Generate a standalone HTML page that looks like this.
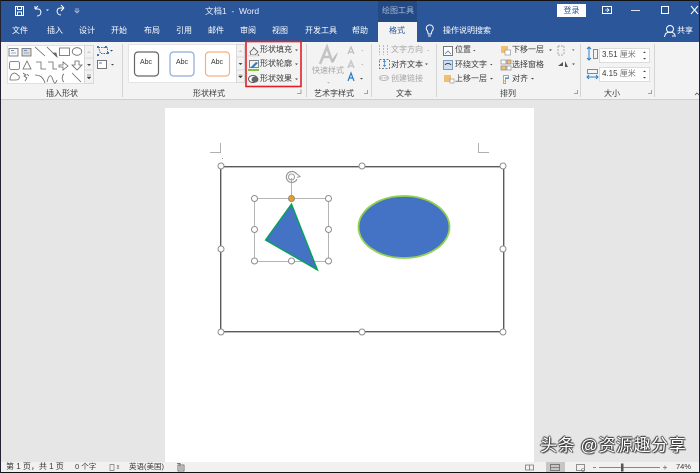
<!DOCTYPE html>
<html><head><meta charset="utf-8">
<style>
html,body{margin:0;padding:0;width:700px;height:473px;overflow:hidden;background:#e6e6e6}
body{position:relative;font-family:"Liberation Sans","Noto Sans CJK SC",sans-serif;font-size:8px;color:#3a3a3a}
.a{position:absolute;white-space:nowrap;line-height:10px}
.b{position:absolute}
.t{color:#fff;top:26px;font-size:8px}
.g{color:#a6a6a6}
svg{position:absolute;left:0;top:0}
</style></head><body>
<div class="b" style="left:0;top:0;width:700px;height:42px;background:#2b579a"></div>
<div class="b" style="left:378px;top:1px;width:39px;height:21px;background:#234a85"></div>
<div class="b" style="left:378px;top:22px;width:39px;height:20px;background:#f3f3f3"></div>
<div class="b" style="left:0;top:42px;width:700px;height:57px;background:#f3f3f3"></div>
<div class="b" style="left:0;top:99px;width:700px;height:1px;background:#cfcfcf"></div>
<div class="b" style="left:165px;top:108px;width:369px;height:355px;background:#fff"></div>
<div class="b" style="left:0;top:462px;width:700px;height:10px;background:#f1f1f1"></div>

<span class="a" style="left:205px;top:6px;color:#e8eef7;font-size:8.5px">文档1 &nbsp;-&nbsp; Word</span>
<span class="a" style="left:382px;top:6px;color:#a9bcd8;font-size:8px">绘图工具</span>
<div class="a" style="left:557px;top:4px;width:29px;height:13px;background:#fff;color:#2b579a;text-align:center;line-height:13px">登录</div>
<span class="a t" style="left:12px">文件</span><span class="a t" style="left:47px">插入</span><span class="a t" style="left:79px">设计</span><span class="a t" style="left:111px">开始</span><span class="a t" style="left:144px">布局</span><span class="a t" style="left:176px">引用</span><span class="a t" style="left:208px">邮件</span><span class="a t" style="left:240px">审阅</span><span class="a t" style="left:272px">视图</span><span class="a t" style="left:305px">开发工具</span><span class="a t" style="left:352px">帮助</span>
<span class="a" style="left:389px;top:26px;color:#2b579a">格式</span>
<span class="a t" style="left:443px">操作说明搜索</span><span class="a t" style="left:677px">共享</span>

<svg width="700" height="473" viewBox="0 0 700 473" fill="none">
<rect x="0" y="0" width="700" height="1" fill="#111"/><rect x="0" y="472" width="700" height="1" fill="#111"/><rect x="0" y="0" width="1" height="473" fill="#223"/><rect x="699" y="0" width="1" height="473" fill="#223"/>
<!-- title bar icons -->
<path d="M15.500 6.500H23.500V15.500H15.500ZM17.500 6.500V9.500H21.500V6.500M17.500 15.500V12H21.500V15.500" stroke="#fff"/>
<path d="M35 8V5M35 8H38C42 8 42 15 37 15M35 8L38 5" stroke="#fff" transform="translate(0,1)"/>
<path d="M46 9.500h3l-1.500 1.500z" fill="#fff"/>
<path d="M64 8H60C56 8 56 15 61 15M64 8L61 5M64 8L61 11" stroke="#fff"/>
<path d="M75 11h4l-2 2zM75 9h4" stroke="#ccd" stroke-width=".7"/>
<rect x="602.500" y="6.500" width="9" height="7" stroke="#fff"/><path d="M605 10h4M607 8l2 2-2 2" stroke="#fff" stroke-width=".8"/>
<path d="M631 10.500h9" stroke="#dfe6f2"/>
<rect x="661.500" y="6.500" width="7" height="7" stroke="#fff"/>
<path d="M691 6l7 8M698 6l-7 8" stroke="#fff"/>
<path d="M427 31a3.500 3.500 0 1 1 4.500 0l-.8 3h-3z M427.500 36h3" stroke="#fff" transform="translate(.5,0)"/>
<circle cx="670" cy="29" r="3.500" stroke="#fff"/><path d="M664.500 37c.5-4 3-5 5.500-5s4 1 5 3M672 36h4" stroke="#fff"/>
<!-- ribbon separators -->
<path d="M122.500 44V97M306.500 44V97M371.500 44V97M436.500 44V97M580.500 44V97M654.500 44V97" stroke="#d4d4d4"/>
<!-- shapes gallery -->
<rect x="7.500" y="45.500" width="86" height="38" fill="#fff" stroke="#e0e0e0"/>
<rect x="84.500" y="45.500" width="9" height="38" fill="#f2f2f2" stroke="#d8d8d8"/>
<path d="M84 58h10M84 70h10" stroke="#d8d8d8"/>
<path d="M87 53l2-2 2 2z" fill="#ccc"/><path d="M87 64h4l-2 2z" fill="#444"/><path d="M87 75h4M87 77h4l-2 2z" fill="#444" stroke="#444" stroke-width=".5"/>
<g stroke="#666" stroke-width=".8">
<rect x="9" y="48.500" width="9" height="7.500" fill="#f4f8fc"/><path d="M11 50.500h3" stroke="#3a7fc4"/><path d="M11 53h5" stroke="#999"/>
<rect x="22" y="48.500" width="9" height="7.500" fill="#ddd"/><path d="M24 50.500h3" stroke="#3a7fc4"/><path d="M24 53h5" stroke="#999"/>
<path d="M35 47l10 9M47 47l9 9"/><path d="M53 53l4 4-1-4z" fill="#666"/>
<rect x="59.500" y="48" width="10" height="7.500"/><ellipse cx="77" cy="51.500" rx="4.800" ry="3.800"/>
<rect x="9.500" y="61.500" width="10" height="8" rx="2"/><path d="M27 61l4 8h-8zM36 62h5v7h5M48 62h5v7h4"/>
<path d="M59 65h4v-3l5 4-5 4v-3h-4z"/><path d="M75 61h4v4h3l-5 5-5-5h3z"/>
<path d="M10 80c0-3 1-6 4-7 3 0 3 2 5 3 1 3-1 4-3 4h-5z"/>
<path d="M23 73l3 2-2 1 3 2-2 3M27 74l2 2"/>
<path d="M35 75c5 0 8 2 10 8M47 82c2-8 4-8 6-2s3 2 4 0M64 74c-2 1-1 3-2 4 1 1 0 3 2 4M72 73l9 9"/>
</g>
<!-- edit/textbox -->
<path d="M98.500 47.500h9v6h-7z" stroke="#666" stroke-dasharray="1.500 1"/><g fill="#2a7cc7"><rect x="97" y="46" width="2" height="2"/><rect x="105" y="46" width="2" height="2"/><rect x="97" y="54" width="2" height="2"/><rect x="107" y="52" width="2" height="2"/></g>
<path d="M110 50h3l-1.500 1.500zM111 64h3l-1.500 1.500z" fill="#444"/>
<rect x="97.500" y="60.500" width="9" height="8" fill="#fff" stroke="#777"/><path d="M99 63h3" stroke="#3a7fc4"/>
<!-- styles gallery -->
<rect x="128.500" y="44.500" width="115" height="38" fill="#fff" stroke="#e4e4e4"/>
<rect x="236.500" y="44.500" width="8" height="38" fill="#f2f2f2" stroke="#d8d8d8"/>
<path d="M236 57h9M236 70h9" stroke="#d8d8d8"/>
<path d="M238.500 52l2-2 2 2z" fill="#ccc"/><path d="M238.500 63h4l-2 2z" fill="#444"/><path d="M238.500 75h4M238.500 76h4l-2 2z" fill="#444" stroke="#444" stroke-width=".4"/>
<rect x="134.500" y="52" width="24" height="24" rx="3.500" fill="#fff" stroke="#666" stroke-width="1.200"/>
<rect x="170" y="52" width="24" height="24" rx="3.500" fill="#fff" stroke="#8eaadb" stroke-width="1.200"/>
<rect x="205.500" y="52" width="24" height="24" rx="3.500" fill="#fff" stroke="#f4b183" stroke-width="1.200"/>
<!-- red box -->
<rect x="246" y="41.500" width="55" height="45" stroke="#e01f26" stroke-width="1.600"/>
<!-- shape format icons -->
<path d="M250 52l4-4 4 4-3 3h-4zM253 47l1 1M258 54l1 2" stroke="#555" stroke-width=".8"/>
<rect x="248" y="55" width="10" height="1.500" fill="#ddd"/>
<path d="M251 67l5-5 2 1-5 5h-2z" fill="#2a7cc7"/><rect x="249.500" y="60.500" width="9" height="7" stroke="#666" stroke-width=".8"/>
<rect x="248" y="69" width="11" height="2" fill="#7cc242"/>
<ellipse cx="253" cy="79" rx="4.500" ry="3.500" fill="#fff" stroke="#555"/><ellipse cx="255" cy="79.500" rx="3.500" ry="3" fill="#666"/>
<path d="M295 49.500h3l-1.500 1.500zM295 63.500h3l-1.500 1.500zM295 78.500h3l-1.500 1.500z" fill="#444"/>
<!-- WordArt -->
<path d="M320 64l7-17 5 14M323 57h7" stroke="#c4c4c4" stroke-width="2.600"/><path d="M331 62c2-4 4-7 7-10-1 4-3 8-5 11z" fill="#bdbdbd"/>
<path d="M327 82h3l-1.500 1.500z" fill="#bbb"/>
<path d="M348 54l3-7 3 7M349 52h4" stroke="#bbb" stroke-width="1.200"/>
<path d="M348 68l3-7 3 7M349 66h4" stroke="#c9c9c9" stroke-width="1.600"/>
<path d="M348 81l3-8 3 8M349 78h4" stroke="#2a7cc7" stroke-width="1.200"/>
<path d="M361 50h2.500l-1.200 1.200zM361 64h2.500l-1.200 1.200z" fill="#bbb"/><path d="M360 78h3l-1.500 1.500z" fill="#444"/>
<!-- text group -->
<path d="M379.500 45v10M383.500 45v10M387.500 45v10" stroke="#bbb" stroke-dasharray="2 1"/>
<rect x="379.500" y="59.500" width="10" height="9" stroke="#777" stroke-dasharray="2 1.500"/><path d="M384.500 61v5M383 62l1.500-1.500 1.500 1.500M383 65l1.500 1.500 1.500-1.500" stroke="#2a7cc7" stroke-width=".7"/>
<path d="M379 78h4M384 78h5" stroke="#bbb"/><ellipse cx="384" cy="78" rx="4.500" ry="2.500" stroke="#bbb"/>
<path d="M427 50h2.500l-1.200 1.200z" fill="#bbb"/><path d="M425 63.500h3l-1.500 1.500z" fill="#444"/>
<!-- arrange -->
<rect x="443.500" y="46.500" width="9" height="9" fill="#fff" stroke="#777"/><path d="M445 54l3-3 3 3" stroke="#3a7fc4" stroke-width=".8"/>
<rect x="443.500" y="60.500" width="9" height="9" fill="#cfe0f2" stroke="#7a9cc0"/><path d="M445 65c1-2 5-2 6 0" stroke="#444"/>
<rect x="444" y="75" width="7" height="7" fill="#f0c070"/><rect x="450" y="79" width="4" height="4" fill="#fff" stroke="#888" stroke-width=".6"/>
<rect x="501" y="46" width="7" height="7" fill="#f0c070"/><rect x="505" y="50" width="5.500" height="5" fill="#fff" stroke="#888" stroke-width=".6"/>
<g stroke="#888" stroke-width=".7"><rect x="501" y="60" width="5" height="4" fill="#fff"/><rect x="507" y="60" width="4" height="4" fill="#f0c070"/><rect x="501" y="66" width="5" height="4" fill="#f0c070"/><rect x="507" y="66" width="4" height="4" fill="#fff"/></g>
<path d="M503.500 75.500h5v3h-3v5h-2z" fill="#fff" stroke="#888" stroke-width=".7"/><path d="M505 78h4" stroke="#2a7cc7"/><path d="M503 81h3" stroke="#e8a33c"/>
<path d="M558 46h6M558 55h6M558 46v9M564 46v9" stroke="#aaa" stroke-dasharray="2 1"/>
<path d="M558 66l5-4v4zM565 67v-6l3 6z" fill="#555"/>
<path d="M473 50h2.500l-1.200 1.200zM490 78h3l-1.500 1.500zM549 49.500h3l-1.500 1.500zM531 78h3l-1.500 1.500zM490 64h2.500l-1.200 1.200zM572 49.500h2.500l-1.200 1.200zM572 63.500h3l-1.500 1.500z" fill="#444"/>
<!-- size -->
<path d="M589 47v13M587 49l2-2 2 2M587 58l2 2 2-2" stroke="#2a7cc7"/><rect x="593.500" y="49.500" width="4" height="9" stroke="#888"/>
<rect x="587.500" y="69.500" width="10" height="4" stroke="#888"/><path d="M587 77h11M589 75l-2 2 2 2M596 75l2 2-2 2" stroke="#2a7cc7"/>
<rect x="599.500" y="48.500" width="50" height="14" fill="#fff" stroke="#dcdcdc"/>
<rect x="599.500" y="67.500" width="50" height="14" fill="#fff" stroke="#dcdcdc"/>
<path d="M643 53l1.500-1.500 1.500 1.500zM643 58h3l-1.500 1.500zM643 72l1.500-1.500 1.500 1.500zM643 77h3l-1.500 1.500z" fill="#444"/>
<!-- dialog launchers -->
<path d="M297 93.500h4v-4M364 93.500h3.500v-3.500M574 93.500h3.500v-3.500M648 93.500h3.500v-3.500" stroke="#888" stroke-width=".8"/>
<path d="M695 95l2-2 2 2" stroke="#555" stroke-width=".8"/>
<!-- page corner marks -->
<path d="M220.500 143v9.500H210M478.500 143v9.500H489" stroke="#b0b0b0"/>
<rect x="222" y="158" width="1" height="1" fill="#999"/>
<!-- canvas -->
<rect x="220.700" y="166.700" width="283" height="165" stroke="#5a5a5a" stroke-width="1.400"/>
<!-- ellipse -->
<ellipse cx="404" cy="227" rx="45.500" ry="31" fill="#4472c4" stroke="#92d050" stroke-width="1.800"/>
<!-- triangle selection -->
<rect x="254.500" y="198.500" width="74" height="63" stroke="#b5b5b5"/>
<path d="M291.500 178v20" stroke="#b5b5b5"/>
<path d="M291.500 204L265.500 240L317.500 270Z" fill="#4472c4" stroke="#00a651" stroke-width="1.300"/>
<path d="M296.500 174a5.500 5.500 0 1 0 .5 5" stroke="#999" stroke-width="1.200"/><circle cx="291.500" cy="177" r="3" stroke="#999"/>
<path d="M296 173l4 3.500-3 1" stroke="#999"/>
<g fill="#fff" stroke="#8c8c8c" stroke-width="1">
<circle cx="221" cy="166" r="3"/><circle cx="362" cy="166" r="3"/><circle cx="503" cy="166" r="3"/>
<circle cx="221" cy="249" r="3"/><circle cx="503" cy="249" r="3"/>
<circle cx="221" cy="332" r="3"/><circle cx="362" cy="332" r="3"/><circle cx="503" cy="332" r="3"/>
<circle cx="254.500" cy="198.500" r="3"/><circle cx="328.500" cy="198.500" r="3"/>
<circle cx="254.500" cy="229.500" r="3"/><circle cx="328.500" cy="229.500" r="3"/>
<circle cx="254.500" cy="261" r="3"/><circle cx="291.500" cy="261" r="3"/><circle cx="328.500" cy="261" r="3"/>
</g>
<circle cx="291.500" cy="198.500" r="3" fill="#f39c12" stroke="#8c8c8c"/>
<!-- status bar -->
<path d="M110 464.500h4v6h-4zM114 464.500v6M117 465l2 4M119 465l-2 4" stroke="#777" stroke-width=".7"/>
<path d="M178 465h6v6h-6zM177 463.500h3M180 463v3M179 467h4M179 469h4" stroke="#555" stroke-width=".8"/>
<rect x="546" y="462" width="19" height="10" fill="#c6c6c6"/>
<path d="M525.500 465h4v5h-4zM529.500 465h4v5h-4z" stroke="#777" stroke-width=".8"/>
<rect x="550.500" y="464.500" width="9" height="6" stroke="#666" stroke-width=".8"/><path d="M551 467.500h8" stroke="#666" stroke-width=".7"/>
<rect x="576.500" y="464.500" width="8" height="6" stroke="#777" stroke-width=".8"/><circle cx="583" cy="470" r="1.500" stroke="#777" stroke-width=".6"/>
<path d="M593 467.500h3M599 467.500h61M663 467.500h4M665 465.500v4" stroke="#888"/>
<rect x="621" y="463.500" width="2.500" height="8" fill="#555"/>
</svg>

<span class="a" style="left:140px;top:58px;font-size:7px;color:#333">Abc</span>
<span class="a" style="left:176px;top:58px;font-size:7px;color:#333">Abc</span>
<span class="a" style="left:211px;top:58px;font-size:7px;color:#333">Abc</span>
<span class="a" style="left:260px;top:45px">形状填充</span>
<span class="a" style="left:260px;top:59px">形状轮廓</span>
<span class="a" style="left:260px;top:74px">形状效果</span>
<span class="a g" style="left:312px;top:66px">快速样式</span>
<span class="a g" style="left:391px;top:45px">文字方向</span>
<span class="a" style="left:391px;top:60px">对齐文本</span>
<span class="a g" style="left:391px;top:74px">创建链接</span>
<span class="a" style="left:455px;top:45px">位置</span>
<span class="a" style="left:455px;top:60px">环绕文字</span>
<span class="a" style="left:455px;top:74px">上移一层</span>
<span class="a" style="left:512px;top:45px">下移一层</span>
<span class="a" style="left:512px;top:60px">选择窗格</span>
<span class="a" style="left:512px;top:74px">对齐</span>
<span class="a" style="left:602px;top:50px;font-size:8px">3.51 <span style="color:#777">厘米</span></span>
<span class="a" style="left:602px;top:69px;font-size:8px">4.15 <span style="color:#777">厘米</span></span>
<span class="a" style="left:46px;top:89px">插入形状</span>
<span class="a" style="left:193px;top:89px">形状样式</span>
<span class="a" style="left:314px;top:89px">艺术字样式</span>
<span class="a" style="left:396px;top:89px">文本</span>
<span class="a" style="left:500px;top:89px">排列</span>
<span class="a" style="left:604px;top:89px">大小</span>
<span class="a" style="left:6px;top:462px;font-size:8px">第 1 页，共 1 页</span>
<span class="a" style="left:75px;top:462px;font-size:7.500px">0 个字</span>
<span class="a" style="left:129px;top:462px;font-size:7.500px">英语(美国)</span>
<span class="a" style="left:676px;top:462px;font-size:7.500px">74%</span>
<span class="a" style="left:540px;top:441px;font-size:17px;color:#fff;letter-spacing:.6px;text-shadow:0 0 1px #222,1px 1px 1px #333,-1px 0 1px #333,0 -1px 1px #333">头条 @资源趣分享</span>
</body></html>
